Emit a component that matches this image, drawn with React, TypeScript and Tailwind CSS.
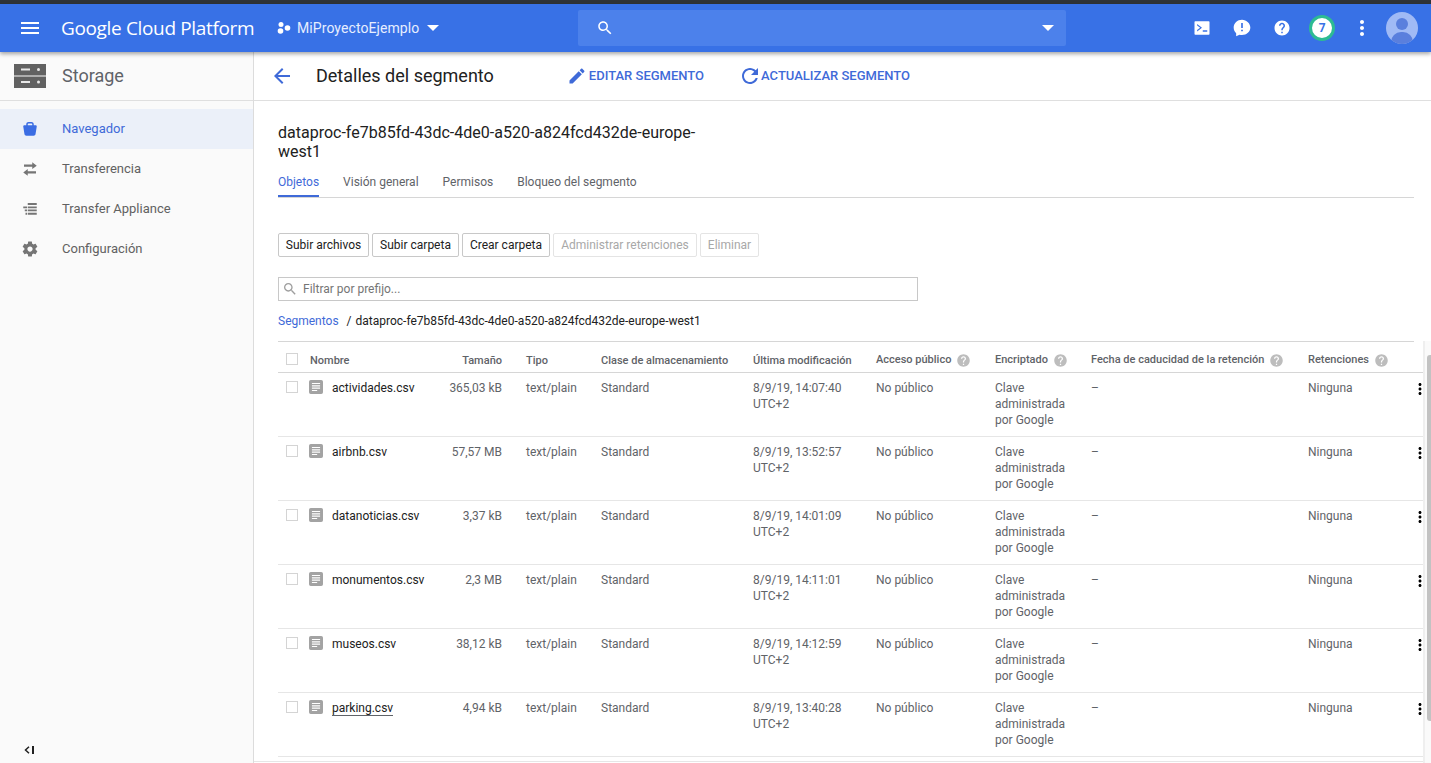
import React from 'react';

const P = {
  menu: 'M3 18h18v-2H3v2zm0-5h18v-2H3v2zm0-7v2h18V6H3z',
  search: 'M15.5 14h-.79l-.28-.27C15.41 12.59 16 11.11 16 9.5 16 5.91 13.09 3 9.5 3S3 5.91 3 9.5 5.91 16 9.5 16c1.61 0 3.09-.59 4.23-1.57l.27.28v.79l5 4.99L20.49 19l-4.99-5zm-6 0C7.01 14 5 11.99 5 9.5S7.01 5 9.5 5 14 7.01 14 9.5 11.99 14 9.5 14z',
  back: 'M20 11H7.83l5.59-5.59L12 4l-8 8 8 8 1.41-1.41L7.83 13H20v-2z',
  edit: 'M3 17.25V21h3.75L17.81 9.94l-3.75-3.75L3 17.25zM20.71 7.04c.39-.39.39-1.02 0-1.41l-2.34-2.34c-.39-.39-1.02-.39-1.41 0l-1.83 1.83 3.75 3.75 1.83-1.83z',
  refresh: 'M17.65 6.35C16.2 4.9 14.21 4 12 4c-4.42 0-7.99 3.58-7.99 8s3.57 8 7.99 8c3.73 0 6.84-2.55 7.73-6h-2.08c-.82 2.33-3.04 4-5.65 4-3.31 0-6-2.69-6-6s2.69-6 6-6c1.66 0 3.14.69 4.22 1.78L13 11h7V4l-2.35 2.35z',
  help: 'M12 2C6.48 2 2 6.48 2 12s4.48 10 10 10 10-4.48 10-10S17.52 2 12 2zm1 17h-2v-2h2v2zm2.07-7.75l-.9.92C13.45 12.9 13 13.5 13 15h-2v-.5c0-1.1.45-2.1 1.17-2.83l1.24-1.26c.37-.36.59-.86.59-1.41 0-1.1-.9-2-2-2s-2 .9-2 2H8c0-2.21 1.79-4 4-4s4 1.79 4 4c0 .88-.36 1.68-.93 2.25z',
  more: 'M12 8c1.1 0 2-.9 2-2s-.9-2-2-2-2 .9-2 2 .9 2 2 2zm0 2c-1.1 0-2 .9-2 2s.9 2 2 2 2-.9 2-2-.9-2-2-2zm0 6c-1.1 0-2 .9-2 2s.9 2 2 2 2-.9 2-2-.9-2-2-2z',
  swap: 'M4 6h11V3l6 4.500-6 4.500V9H4V6zM20 15H9v-3l-6 4.500 6 4.500v-3h11v-3z',
  settings: 'M19.43 12.98c.04-.32.07-.64.07-.98s-.03-.66-.07-.98l2.11-1.65c.19-.15.24-.42.12-.64l-2-3.46c-.12-.22-.39-.3-.61-.22l-2.49 1c-.52-.4-1.08-.73-1.69-.98l-.38-2.65C14.46 2.18 14.25 2 14 2h-4c-.25 0-.46.18-.49.42l-.38 2.65c-.61.25-1.17.59-1.69.98l-2.49-1c-.23-.09-.49 0-.61.22l-2 3.46c-.13.22-.07.49.12.64l2.11 1.65c-.04.32-.07.65-.07.98s.03.66.07.98l-2.11 1.65c-.19.15-.24.42-.12.64l2 3.46c.12.22.39.3.61.22l2.49-1c.52.4 1.08.73 1.69.98l.38 2.65c.03.24.24.42.49.42h4c.25 0 .46-.18.49-.42l.38-2.65c.61-.25 1.17-.59 1.69-.98l2.49 1c.23.09.49 0 .61-.22l2-3.46c.12-.22.07-.49-.12-.64l-2.11-1.65zM12 15.5c-1.93 0-3.5-1.57-3.5-3.5s1.57-3.5 3.5-3.5 3.5 1.57 3.5 3.5-1.57 3.5-3.5 3.5z',
  bucket: 'M7 5.500C7 3.500 8.500 2.500 10 2.500h4c1.500 0 3 1 3 3V7h2.500c1 0 1.700.800 1.500 1.800l-1.600 10c-.200 1.300-1.300 2.200-2.600 2.200H7.200c-1.300 0-2.400-.900-2.600-2.200L3 8.800C2.800 7.800 3.500 7 4.500 7H7V5.500zM9 7h6V5.500c0-.600-.400-1-1-1h-4c-.600 0-1 .400-1 1V7z',
  list: 'M9 4h12v2.500H9V4zM3 8.500h5V11H3V8.500zm6 0h12V11H9V8.500zM5 12.500h3V15H5v-2.500zm4 0h12V15H9v-2.500zM6 17h2v2.500H6V17zm3 0h12v2.500H9V17z',
  terminal: 'M3 3h18a1 1 0 0 1 1 1v16a1 1 0 0 1-1 1H3a1 1 0 0 1-1-1V4a1 1 0 0 1 1-1zm2.500 5.500L9.500 11.500 5.500 14.500V16.500L12 11.500 5.500 6.500v2zM13 15v2h6v-2h-6z',
  feedback: 'M12 2C6.480 2 2 6.200 2 11.500c0 2.700 1.200 5.100 3 6.800V22l4-2c1 .3 2 .5 3 .5 5.520 0 10-4 10-9S17.520 2 12 2zm1 14h-2v-2h2v2zm0-4h-2V6h2v6z',
  doc: 'M3 0h18a3 3 0 0 1 3 3v18a3 3 0 0 1-3 3H3a3 3 0 0 1-3-3V3a3 3 0 0 1 3-3zm2 5v2h14V5H5zm0 4v2h14V9H5zm0 4v2h14v-2H5zm0 4v2h9v-2H5z',
};

function Icon({ d, className }: { d: string; className: string }) {
  return (
    <svg viewBox="0 0 24 24" className={className} fill="currentColor" aria-hidden="true">
      <path d={d} fillRule="evenodd" />
    </svg>
  );
}

function TopBar() {
  return (
    <header className="relative z-10 flex h-[48px] shrink-0 items-center bg-[#3871e6] text-white shadow-[0_2px_4px_rgba(0,0,0,0.35)]">
      <Icon d={P.menu} className="ml-[18px] h-6 w-6" />
      <span className="ml-[19px] w-[193px] whitespace-nowrap font-['Open_Sans',sans-serif] text-[19px] leading-none tracking-[-0.35px]">Google Cloud Platform</span>
      <svg viewBox="0 0 14 14" className="ml-[23px] h-[14px] w-[14px]" fill="currentColor" aria-hidden="true">
        <circle cx="4" cy="3.500" r="2.500" />
        <circle cx="3.500" cy="10" r="2.800" />
        <circle cx="10.500" cy="7" r="2.800" />
      </svg>
      <span className="ml-[6px] text-[14px] tracking-[0.08px] text-[#e6eeff]">MiProyectoEjemplo</span>
      <div className="ml-[8px] h-0 w-0 border-x-[6px] border-t-[6px] border-x-transparent border-t-white" />
      <div className="ml-[139px] flex h-9 w-[488px] items-center justify-between rounded-[2px] bg-[#4c81eb] pl-[18px] pr-[12px]">
        <Icon d={P.search} className="h-[18px] w-[18px]" />
        <div className="h-0 w-0 border-x-[6px] border-t-[6px] border-x-transparent border-t-white" />
      </div>
      <Icon d={P.terminal} className="ml-[127px] h-[18px] w-[18px]" />
      <Icon d={P.feedback} className="ml-[21px] h-[20px] w-[20px]" />
      <Icon d={P.help} className="ml-[21px] h-[18px] w-[18px]" />
      <div className="ml-[18px] flex h-[26px] w-[26px] items-center justify-center rounded-full border-[3px] border-[#2dbb93] bg-white text-[12px] font-bold text-[#3871e6]">7</div>
      <Icon d={P.more} className="ml-[15px] h-6 w-6" />
      <div className="relative ml-[12px] h-8 w-8 overflow-hidden rounded-full bg-[#a0baf5]">
        <div className="absolute left-[10px] top-[6px] h-3 w-3 rounded-full bg-[#5a7fdd]" />
        <div className="absolute left-[5px] top-[20px] h-5 w-[22px] rounded-full bg-[#5a7fdd]" />
      </div>
    </header>
  );
}

const nav = [
  { label: 'Navegador', d: P.bucket, active: true },
  { label: 'Transferencia', d: P.swap, active: false },
  { label: 'Transfer Appliance', d: P.list, active: false },
  { label: 'Configuración', d: P.settings, active: false },
];

function Sidebar() {
  return (
    <aside className="flex w-[254px] shrink-0 flex-col border-r border-[#dcdcdc] bg-[#fafafa]">
      <div className="flex h-[49px] shrink-0 items-center border-b border-[#dfdfdf] pl-[14px]">
        <svg viewBox="0 0 32 24" className="h-[24px] w-[32px]" aria-hidden="true">
          <rect x="0" y="0" width="32" height="11.500" fill="#616161" />
          <rect x="0" y="12.500" width="32" height="11.500" fill="#616161" />
          <rect x="7" y="4.500" width="9" height="2" fill="#e8e8e8" />
          <rect x="7" y="17" width="9" height="2" fill="#e8e8e8" />
          <circle cx="24.500" cy="5.500" r="1.500" fill="#e8e8e8" />
          <circle cx="24.500" cy="18" r="1.500" fill="#e8e8e8" />
        </svg>
        <span className="-mt-0.5 ml-4 text-[18px] text-[#5f6368]">Storage</span>
      </div>
      <nav className="pt-2">
        {nav.map((n) => (
          <div key={n.label} className={n.active ? 'flex h-10 items-center bg-[#ebf0f9] pl-[21px] text-[#3f6ad8]' : 'flex h-10 items-center pl-[21px] text-[#616161]'}>
            <Icon d={n.d} className={n.active ? 'h-[18px] w-[18px] text-[#3b6de3]' : 'h-[18px] w-[18px] text-[#757575]'} />
            <span className="ml-[23px] text-[13px]">{n.label}</span>
          </div>
        ))}
      </nav>
      <div className="mt-auto flex h-[17px] items-start pl-[24px]">
        <svg viewBox="0 0 10 8" className="h-2 w-[10px]" fill="none" stroke="#212121" aria-hidden="true">
          <path d="M5 0.700 1.500 4 5 7.300" strokeWidth="1.500" />
          <path d="M9 0v8" strokeWidth="2" />
        </svg>
      </div>
    </aside>
  );
}

function Btn({ children, off, width }: { children: React.ReactNode; off?: boolean; width: string }) {
  const tone = off ? 'border-[#e4e4e4] text-[#a8a8a8]' : 'border-[#c8c8c8] text-[#212121]';
  return (
    <div className={`flex h-6 items-center justify-center whitespace-nowrap rounded-[2px] border text-[12px] ${tone} ${width}`}>
      {children}
    </div>
  );
}

function Hint({ label }: { label: string }) {
  return (
    <span className="flex items-center gap-[5px] whitespace-nowrap">
      {label}
      <Icon d={P.help} className="h-[15px] w-[15px] text-[#bdbdbd]" />
    </span>
  );
}

const gridCols = 'grid grid-cols-[32px_130px_86px_75px_152px_123px_119px_96px_217px_100px_16px]';

const files = [
  { name: 'actividades.csv', size: '365,03 kB', date: '8/9/19, 14:07:40' },
  { name: 'airbnb.csv', size: '57,57 MB', date: '8/9/19, 13:52:57' },
  { name: 'datanoticias.csv', size: '3,37 kB', date: '8/9/19, 14:01:09' },
  { name: 'monumentos.csv', size: '2,3 MB', date: '8/9/19, 14:11:01' },
  { name: 'museos.csv', size: '38,12 kB', date: '8/9/19, 14:12:59' },
  { name: 'parking.csv', size: '4,94 kB', date: '8/9/19, 13:40:28' },
];

function FileTable() {
  return (
    <div className="mt-[12px] border-t border-[#d6d6d6] text-[12px] leading-4 text-[#5f6368]">
      <div className="mr-[-10px]">
        <div className={`${gridCols} h-[31px] items-start border-b border-[#d6d6d6] pt-[10px] text-[11px] font-medium text-[#5f6368]`}>
          <div className="pl-2 pt-px"><div className="h-3 w-3 border border-[#d4d4d4]" /></div>
          <div className="pt-px">Nombre</div>
          <div className="pr-6 pt-px text-right">Tamaño</div>
          <div className="pt-px">Tipo</div>
          <div className="pt-px">Clase de almacenamiento</div>
          <div className="pt-px">Última modificación</div>
          <Hint label="Acceso público" />
          <Hint label="Encriptado" />
          <Hint label="Fecha de caducidad de la retención" />
          <Hint label="Retenciones" />
          <div />
        </div>
        {files.map((f) => (
          <div key={f.name} className={`${gridCols} h-[64px] border-b border-[#e6e6e6] pt-[7px]`}>
            <div className="pl-2 pt-px"><div className="h-3 w-3 border border-[#d4d4d4]" /></div>
            <div className="flex items-start whitespace-nowrap text-[#212121]">
              <Icon d={P.doc} className="ml-[-1px] h-[14px] w-[14px] text-[#a3a3a3]" />
              <span className={f.name === 'parking.csv' ? 'ml-[9px] border-b border-[#5f6368] pt-px leading-[14px]' : 'ml-[9px]'}>{f.name}</span>
            </div>
            <div className="pr-6 text-right">{f.size}</div>
            <div>text/plain</div>
            <div>Standard</div>
            <div>{f.date}<br />UTC+2</div>
            <div>No público</div>
            <div>Clave<br />administrada<br />por Google</div>
            <div>–</div>
            <div>Ninguna</div>
            <Icon d={P.more} className="ml-[3px] h-[18px] w-[18px] text-black" />
          </div>
        ))}
      </div>
    </div>
  );
}

function Main() {
  return (
    <main className="relative min-w-0 flex-1 overflow-hidden bg-white">
      <div className="flex h-[49px] items-center border-b border-[#dfdfdf]">
        <Icon d={P.back} className="ml-[16px] h-6 w-6 text-[#3f6ad8]" />
        <h1 className="-mt-0.5 ml-[22px] text-[18px] font-normal text-[#212121]">Detalles del segmento</h1>
        <Icon d={P.edit} className="ml-[73px] h-5 w-5 text-[#3f6ad8]" />
        <span className="ml-[2px] text-[13px] font-medium text-[#3f6ad8]">EDITAR SEGMENTO</span>
        <Icon d={P.refresh} className="ml-[34px] h-6 w-6 text-[#3f6ad8]" />
        <span className="-ml-px text-[13px] font-medium text-[#3f6ad8]">ACTUALIZAR SEGMENTO</span>
      </div>
      <div className="pl-[24px] pr-[17px]">
        <h2 className="mt-[22px] w-[430px] break-words text-[16px] font-normal leading-[19px] text-[#212121]">dataproc-fe7b85fd-43dc-4de0-a520-a824fcd432de-europe-west1</h2>
        <div className="mt-[12px] flex gap-6 border-b border-[#d6d6d6] text-[12px]">
          <div className="border-b-2 border-[#3f6ad8] pb-[4px] text-[#3f6ad8]">Objetos</div>
          <div className="text-[#5f6368]">Visión general</div>
          <div className="text-[#5f6368]">Permisos</div>
          <div className="text-[#5f6368]">Bloqueo del segmento</div>
        </div>
        <div className="mt-[35px] flex gap-[3px]">
          <Btn width="w-[91px]">Subir archivos</Btn>
          <Btn width="w-[87px]">Subir carpeta</Btn>
          <Btn width="w-[88px]">Crear carpeta</Btn>
          <Btn off width="w-[144px]">Administrar retenciones</Btn>
          <Btn off width="w-[59px]">Eliminar</Btn>
        </div>
        <div className="mt-[20px] flex h-6 w-[640px] items-center border border-[#c8c8c8] pl-[3px] text-[12px] text-[#757575]">
          <Icon d={P.search} className="h-4 w-4 text-[#9e9e9e]" />
          <span className="ml-[5px]">Filtrar por prefijo...</span>
        </div>
        <div className="mt-[12px] flex text-[12px] leading-4">
          <span className="text-[#3f6ad8]">Segmentos</span>
          <span className="ml-2 text-[#212121]">/</span>
          <span className="ml-[4px] text-[#212121]">dataproc-fe7b85fd-43dc-4de0-a520-a824fcd432de-europe-west1</span>
        </div>
        <FileTable />
      </div>
      <div className="absolute bottom-[1px] left-0 right-0 h-px bg-[#e6e6e6]" />
      <div className="absolute bottom-0 right-0 top-[289px] w-2 border-l-2 border-[#efefef] bg-[#fafafa] pl-[2px] pt-[14px]">
        <div className="h-[366px] w-1 rounded-l-[3px] bg-[#c2c2c2]" />
      </div>
    </main>
  );
}

export default function App() {
  return (
    <div className="flex h-[763px] flex-col overflow-hidden bg-white font-['Roboto',sans-serif]">
      <div className="h-1 shrink-0 bg-[#2f3337]" />
      <TopBar />
      <div className="flex min-h-0 flex-1">
        <Sidebar />
        <Main />
      </div>
    </div>
  );
}
